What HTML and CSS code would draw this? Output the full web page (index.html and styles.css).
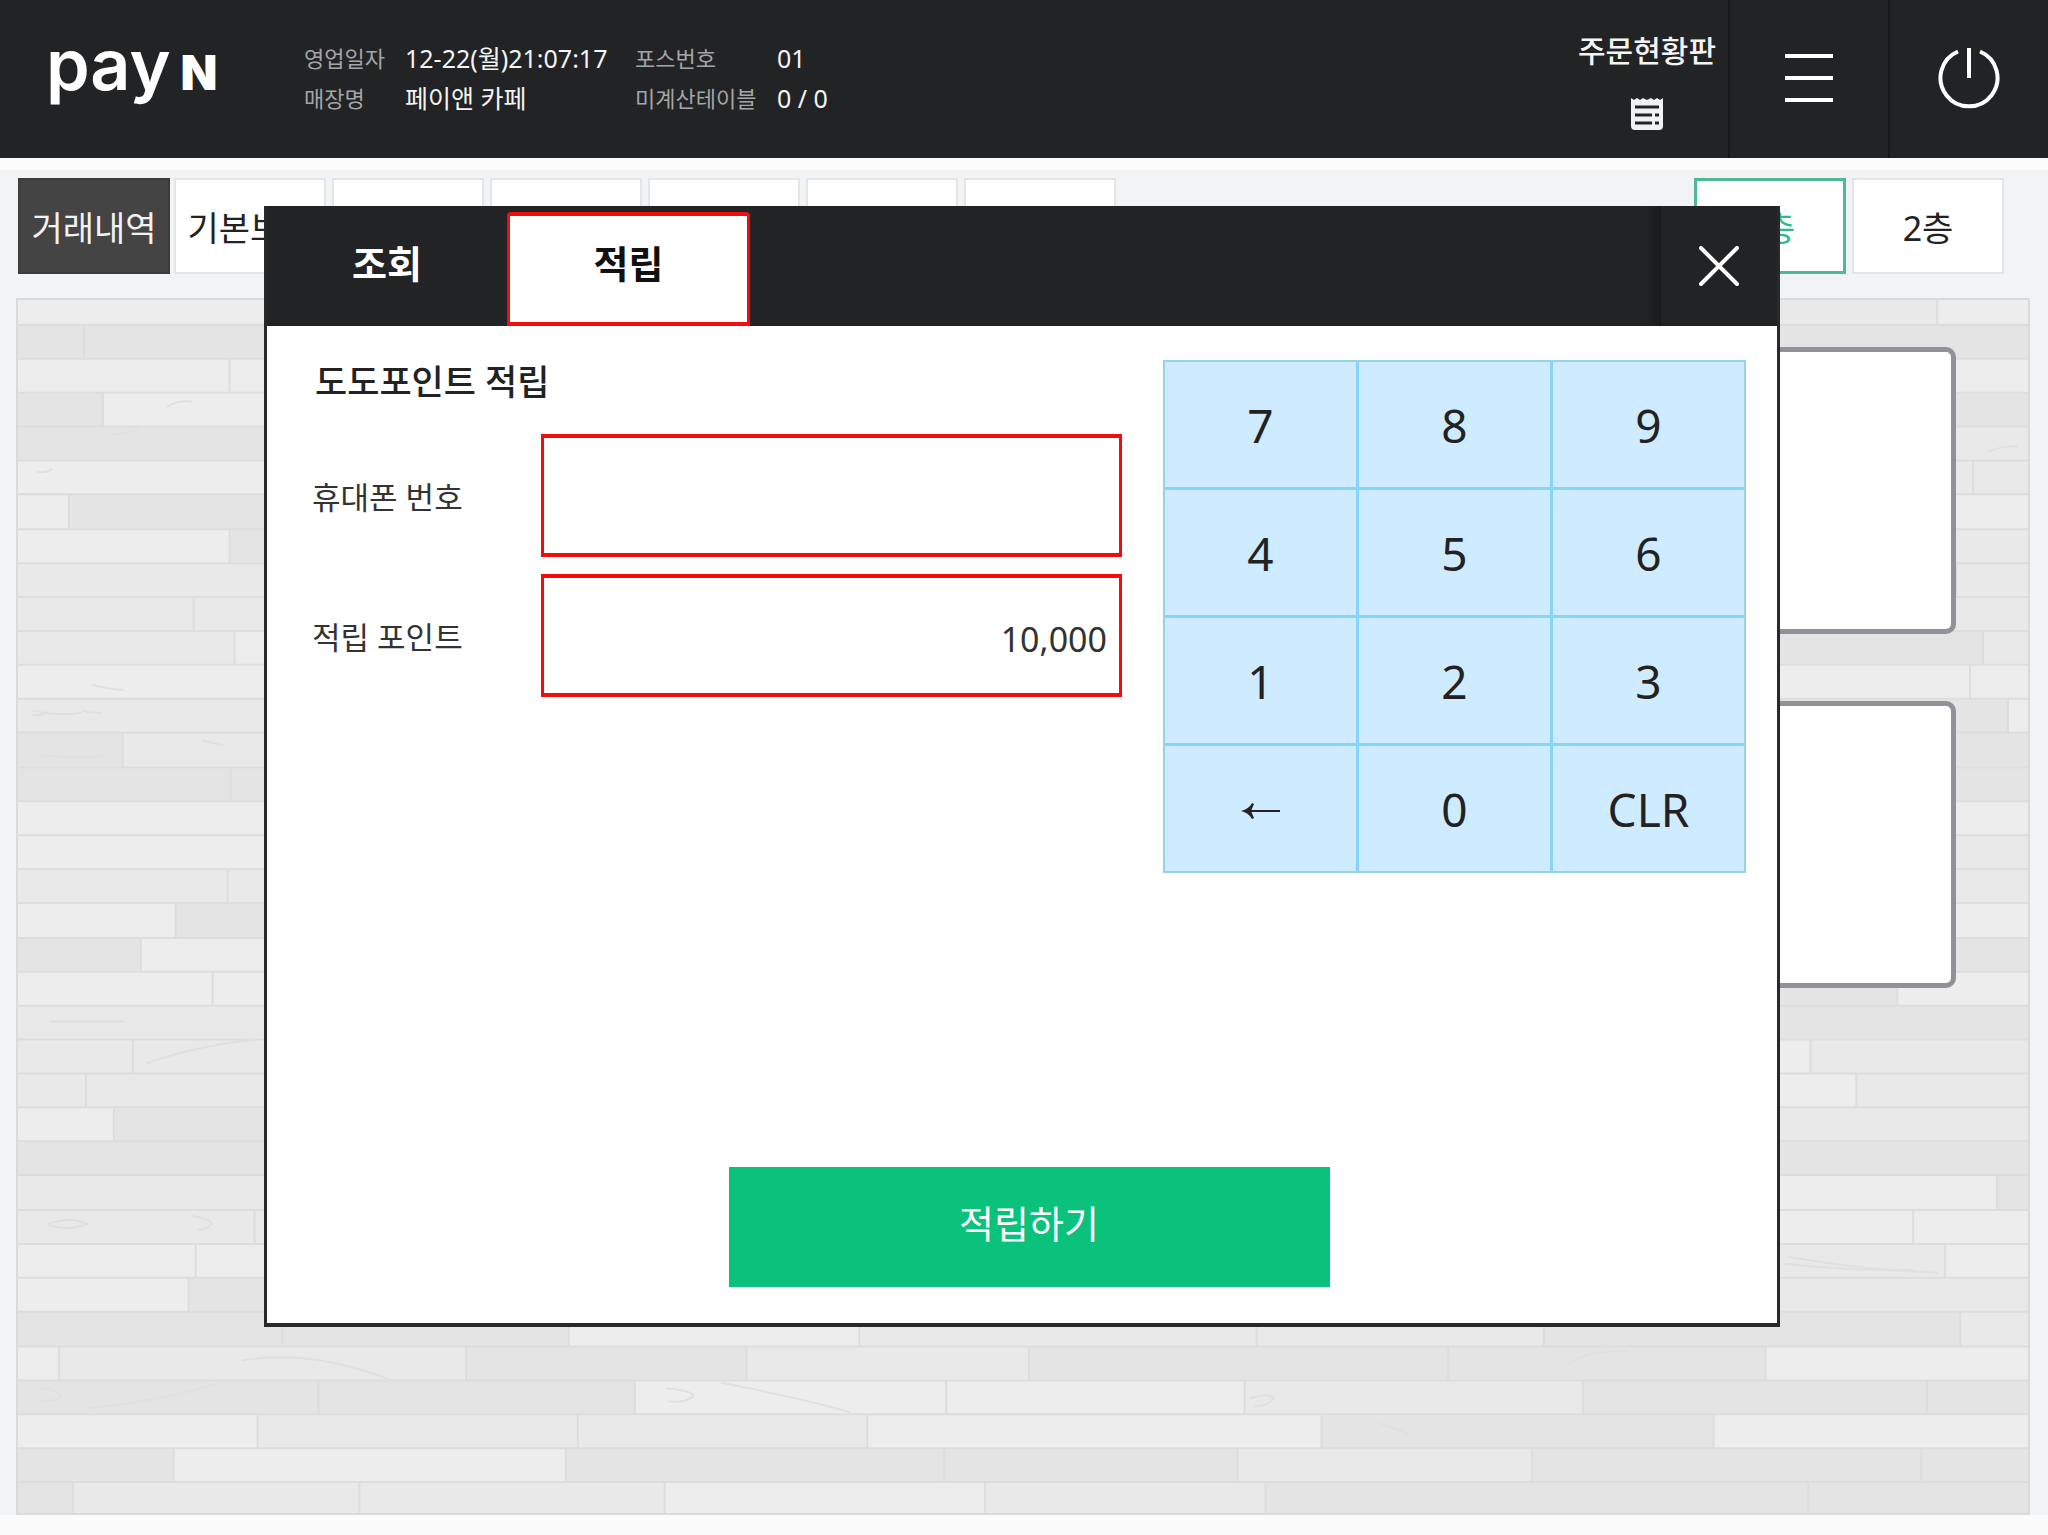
FILE: index.html
```html
<!DOCTYPE html>
<html lang="ko">
<head>
<meta charset="utf-8">
<meta name="viewport" content="width=device-width, initial-scale=1">
<title>pay N</title>
<link rel="stylesheet" href="styles.css">
</head>
<body>
<header class="topbar">
  <a class="logo" href="#" aria-label="pay N"><span class="logo-pay">pay</span><span class="logo-n">N</span></a>
  <dl class="status">
    <dt>영업일자</dt><dd>12-22(월)21:07:17</dd>
    <dt>포스번호</dt><dd>01</dd>
    <dt>매장명</dt><dd>페이앤 카페</dd>
    <dt>미계산테이블</dt><dd>0 / 0</dd>
  </dl>
  <button class="orders" type="button">
    <span>주문현황판</span>
    <svg width="32" height="34" viewBox="0 0 32 34" aria-hidden="true">
      <path fill="#f0f1f3" d="M0 1l3 2 3-2 3 2 3-2 4 2 4-2 3 2 3-2 3 2 3-2v28q0 4-4 4H4q-4 0-4-4z"/>
      <path stroke="#222325" stroke-width="3" d="M4 10h24M4 18h17M24 18h4M4 26h17M24 26h4"/>
    </svg>
  </button>
  <button class="bar-button" type="button" aria-label="메뉴">
    <svg width="48" height="48" viewBox="0 0 48 48" aria-hidden="true"><path stroke="#fff" stroke-width="4" d="M0 2h48M0 24h48M0 46h48"/></svg>
  </button>
  <button class="bar-button" type="button" aria-label="종료">
    <svg width="62" height="62" viewBox="0 0 62 62" aria-hidden="true"><path fill="none" stroke="#fff" stroke-width="4" d="M20 4.500A28.500 28.500 0 1 0 42 4.500M31 1v30"/></svg>
  </button>
</header>

<main class="board">
  <nav class="tabs" aria-label="테이블 그룹">
    <button class="tab tab-dark" type="button">거래내역</button>
    <div class="tab-group">
      <button class="tab" type="button">기본보기</button>
      <button class="tab" type="button" aria-label="빈 탭 1"></button>
      <button class="tab" type="button" aria-label="빈 탭 2"></button>
      <button class="tab" type="button" aria-label="빈 탭 3"></button>
      <button class="tab" type="button" aria-label="빈 탭 4"></button>
      <button class="tab" type="button" aria-label="빈 탭 5"></button>
    </div>
    <div class="tab-group floors">
      <button class="tab tab-current" type="button">1층</button>
      <button class="tab" type="button">2층</button>
    </div>
  </nav>
  <section class="floor" aria-label="테이블 배치">
    <svg class="planks" viewBox="16 298 2014 1217" preserveAspectRatio="none" aria-hidden="true">
      <path fill="#e9e9e9" d="M16 298h2014v1217H16z"/>
      <path fill="#ededed" d="M16 298h264v25H16zM16 357h264v34H16zM101 391h180v34H101zM16 459h264v34H16zM16 493h51v35H16zM16 528h212v34H16zM233 630h40v34h-40zM16 664h264v34H16zM16 801h264v68H16zM16 903h158v35H16zM139 938h140v34H139zM16 972h264v34H16zM16 1108h96v34H16zM16 1245h264v34H16zM16 1279h171v34H16zM568 1313h291v35H568zM16 1348h41v34H16zM1767 1348h263v34h-263zM634 1382h611v34H634zM16 1416h240v34H16zM867 1416h455v34H867zM1715 1416h315v34h-315zM172 1450h393v34H172zM664 1484h321v31H664zM1939 298h91v25h-91zM1770 357h260v34h-260zM1770 493h260v35h-260zM1770 664h260v34h-260zM2010 698h20v34h-20zM1770 801h260v34h-260zM1770 903h260v35h-260zM1899 972h131v34h-131zM1770 1040h42v34h-42zM1770 1074h88v34h-88zM1770 1176h229v35h-229zM1770 1211h260v34h-260zM1947 1245h83v34h-83z"/>
      <path fill="#e4e4e4" d="M16 323h264v34H16zM16 391h85v34H16zM16 425h264v34H16zM67 493h200v35H67zM228 528h40v34h-40zM16 732h105v35H16zM16 767h264v34H16zM174 903h100v35H174zM16 938h123v34H16zM112 1108h160v34H112zM16 1142h264v34H16zM187 1279h90v34h-90zM16 1313h552v35H16zM465 1348h281v34H465zM1029 1348h738v34h-738zM16 1382h618v34H16zM1584 1382h446v34h-446zM1322 1416h393v34h-393zM16 1450h156v34H16zM565 1450h673v34H565zM1533 1450h497v34h-497zM16 1484h55v31H16zM1266 1484h764v31h-764zM1545 1313h417v35h-417zM1770 323h260v34h-260zM1770 391h260v34h-260zM1770 630h215v34h-215zM1770 698h240v34h-240zM1770 732h260v69h-260zM1770 938h260v34h-260zM1770 972h129v34h-129zM1770 1006h260v34h-260zM1770 1142h260v34h-260zM1999 1176h31v35h-31z"/>
      <path class="seam" d="M16 323h2014M16 357h2014M16 391h2014M16 425h2014M16 459h2014M16 493h2014M16 528h2014M16 562h2014M16 596h2014M16 630h2014M16 664h2014M16 698h2014M16 732h2014M16 767h2014M16 801h2014M16 835h2014M16 869h2014M16 903h2014M16 938h2014M16 972h2014M16 1006h2014M16 1040h2014M16 1074h2014M16 1108h2014M16 1142h2014M16 1176h2014M16 1211h2014M16 1245h2014M16 1279h2014M16 1313h2014M16 1348h2014M16 1382h2014M16 1416h2014M16 1450h2014M16 1484h2014"/>
      <path class="seam" d="M82 323v34M228 357v34M101 391v34M67 493v35M228 528v34M192 596v34M233 630v34M121 732v35M229 767v34M226 869v34M174 903v35M139 938v34M211 972v34M131 1040v34M84 1074v34M112 1108v34M253 1211v34M194 1245v34M187 1279v34M281 1313v35M568 1313v35M859 1313v35M1257 1313v35M1545 1313v35M1962 1313v35M57 1348v34M465 1348v34M746 1348v34M1029 1348v34M1449 1348v34M1767 1348v34M317 1382v34M634 1382v34M946 1382v34M1245 1382v34M1584 1382v34M1929 1382v34M256 1416v34M577 1416v34M867 1416v34M1322 1416v34M1715 1416v34M172 1450v34M565 1450v34M944 1450v34M1238 1450v34M1533 1450v34M1923 1450v34M71 1484v31M358 1484v31M664 1484v31M985 1484v31M1266 1484v31M1810 1484v31M1939 298v25M1975 459v34M1958 562v34M1985 630v34M1972 664v34M2010 698v34M1899 972v34M1812 1040v34M1858 1074v34M1999 1176v35M1915 1211v34M1947 1245v34"/>
      <path class="grain" d="M165 405q12-7 25-5M110 433q14-1 27-5M35 470q10 2 15-3M30 710q30 6 50 2M90 684q18 5 32 5M30 714q8 2 16-2M80 710q12 3 20 2M200 740q14 3 22 5M40 755q30 3 60 1M145 1064q50-18 110-24M48 1022h75M45 1225q25-8 40 0q-20 8-40 0M190 1217q18 2 20 8q-5 6-14 6M240 1362q70-12 150 20M85 1410q80-8 140-28M40 1390q18 2 18 8q-5 6-18 4M665 1390q28 2 28 8q-10 7-25 5M720 1384q90 18 130 30M1250 1400q20-6 24 0q-5 8-20 8M1570 1365q20-14 60-12M1380 1425q25 8 30 12M1790 1258q80 14 150 16M1785 1265q80 8 130 6M1790 500h120M1990 450q15-6 30-5"/>
    </svg>
    <button class="table-card" type="button" aria-label="테이블 1"></button>
    <button class="table-card" type="button" aria-label="테이블 2"></button>
  </section>
</main>

<div class="overlay">
  <section class="dialog" role="dialog" aria-label="도도포인트">
    <div class="dialog-bar">
      <button class="dialog-tab" type="button">조회</button>
      <button class="dialog-tab dialog-tab-active" type="button">적립</button>
      <button class="close" type="button" aria-label="닫기">
        <svg width="40" height="40" viewBox="0 0 40 40" aria-hidden="true"><path stroke="#fff" stroke-width="4" stroke-linecap="round" d="M2 2l36 36M38 2L2 38"/></svg>
      </button>
    </div>
    <form class="dialog-body">
      <div class="columns">
        <div class="fields">
          <h2 class="title">도도포인트 적립</h2>
          <label for="phone">휴대폰 번호</label>
          <input id="phone" type="text" inputmode="numeric">
          <label for="points">적립 포인트</label>
          <input id="points" type="text" inputmode="numeric" value="10,000">
        </div>
        <div class="keypad">
          <button type="button">7</button><button type="button">8</button><button type="button">9</button>
          <button type="button">4</button><button type="button">5</button><button type="button">6</button>
          <button type="button">1</button><button type="button">2</button><button type="button">3</button>
          <button type="button" aria-label="지우기"><svg width="40" height="20" viewBox="0 0 40 20" aria-hidden="true"><path fill="none" stroke="#222" stroke-width="2" d="M3 12h36"/><path fill="#222" d="M0 12Q8 10 11 4l2 1-3 7 3 7-2 1Q8 14 0 12z"/></svg></button><button type="button">0</button><button type="button">CLR</button>
        </div>
      </div>
      <button class="submit" type="button">적립하기</button>
    </form>
  </section>
</div>
</body>
</html>
```

FILE: styles.css
```css
* {
  box-sizing: border-box;
}

body {
  margin: 0;
  min-height: 100vh;
  display: flex;
  flex-direction: column;
  background: #fbfbfb;
  color: #222;
  font-family: "Noto Sans", "Noto Sans CJK KR", sans-serif;
}

button {
  margin: 0;
  padding: 0;
  border: 0;
  background: none;
  color: inherit;
  font: inherit;
}

svg {
  display: block;
}

/* Top bar */
.topbar {
  display: flex;
  height: 158px;
  background: #222325;
  color: #f4f4f4;
}

.logo {
  display: flex;
  align-items: baseline;
  gap: 10px;
  width: 304px;
  padding: 29px 0 0 46px;
  color: #fff;
  font-family: Inter, sans-serif;
  line-height: 72px;
  text-decoration: none;
}

.logo-pay {
  font-size: 70px;
  font-weight: 600;
}

.logo-n {
  font-size: 48px;
  font-weight: 900;
}

.status {
  display: grid;
  grid-template-columns: 101px 230px 142px 1fr;
  grid-auto-rows: 40px;
  align-content: center;
  flex: 1;
  margin: 0;
  font-size: 25px;
  line-height: 38px;
}

.status dt {
  color: #a4a5a8;
  font-size: 22px;
}

.status dd {
  margin: 0;
}

.orders {
  display: flex;
  flex-direction: column;
  align-items: center;
  gap: 24px;
  width: 162px;
  padding-top: 29px;
  font-size: 30px;
  font-weight: 500;
  line-height: 44px;
}

.bar-button {
  display: grid;
  place-items: center;
  width: 160px;
  padding-bottom: 2px;
  border-left: 2px solid #17181a;
}

/* Table board */
.board {
  display: flex;
  flex: 1;
  flex-direction: column;
  gap: 24px;
  margin-bottom: 20px;
  padding: 8px 18px 0 16px;
  border-top: 12px solid #fcfcfc;
  background: #f2f3f4;
}

.tabs {
  display: flex;
  gap: 4px;
  padding: 0 26px 0 2px;
}

.tab-group {
  display: flex;
  gap: 6px;
}

.floors {
  margin-left: auto;
}

.tab {
  width: 152px;
  height: 96px;
  border: 2px solid #e4e5e7;
  background: #fff;
  font-size: 34px;
}

.tab-dark {
  border-color: #3c3c3d;
  background: #444445;
  color: #f2f2f2;
}

.tab-current {
  border: 3px solid #4db996;
  color: #2dbb8b;
}

.floor {
  position: relative;
  display: flex;
  flex: 1;
  flex-direction: column;
  align-items: flex-end;
  gap: 67px;
  padding: 47px 72px 47px 0;
  border: 2px solid #d9dadb;
}

.planks {
  position: absolute;
  inset: 0;
  width: 100%;
  height: 100%;
}

.seam {
  fill: none;
  stroke: #dddddd;
  stroke-width: 2;
}

.grain {
  fill: none;
  stroke: #e0e0e0;
  stroke-width: 2;
}

.table-card {
  position: relative;
  width: 400px;
  height: 287px;
  border: 5px solid #919197;
  border-radius: 10px;
  background: #fff;
}

/* Points dialog */
.overlay {
  position: absolute;
  inset: 0;
  display: grid;
  place-items: center;
  padding: 0 4px 2px 0;
}

.dialog {
  width: 1516px;
  max-width: 96%;
  border: 3px solid #28292a;
  border-width: 0 3px 4px;
  background: #fff;
}

.dialog-bar {
  display: flex;
  height: 120px;
  overflow: hidden;
  background: #222325;
}

.dialog-tab {
  width: 240px;
  height: 114px;
  margin-top: 6px;
  padding-bottom: 16px;
  color: #fff;
  font-size: 38px;
  font-weight: 700;
}

.dialog-tab-active {
  width: 243px;
  border: 4px solid #f20c0c;
  border-width: 4px 3px;
  border-radius: 4px 4px 0 0;
  background: #fff;
  color: #111;
}

.close {
  display: grid;
  place-items: center;
  width: 118px;
  height: 120px;
  margin-left: auto;
  border-left: 2px solid #1a1b1c;
  box-shadow: -8px 0 8px #1b1c1d;
}

.dialog-body {
  display: flex;
  flex-direction: column;
  align-items: center;
  gap: 294px;
  padding: 34px 31px 36px 45px;
}

.columns {
  display: grid;
  grid-template-columns: 1fr 583px;
  gap: 41px;
  width: 100%;
}

.fields {
  display: grid;
  grid-template-columns: 229px 1fr;
  align-content: start;
  align-items: center;
  row-gap: 17px;
  color: #333;
  font-size: 31px;
}

.title {
  grid-column: 1 / -1;
  margin: 0 0 13px;
  padding-left: 3px;
  color: #222;
  font-size: 35px;
  font-weight: 500;
  line-height: 44px;
}

.fields input {
  width: 100%;
  height: 123px;
  padding: 6px 12px 0;
  border: 4px solid #f20c0c;
  border-width: 4px 3px;
  background: #fff;
  color: #333;
  font: inherit;
  font-size: 34px;
  text-align: right;
}

.keypad {
  display: grid;
  grid-template-columns: repeat(3, 1fr);
  grid-auto-rows: 125px;
  gap: 3px;
  border: 2px solid #98d1ee;
  background: #87d3fa;
}

.keypad button {
  display: grid;
  place-items: center;
  background: #cfebff;
  font-size: 46px;
}

.submit {
  width: 601px;
  height: 120px;
  padding-bottom: 12px;
  background: #0ac27c;
  color: #fff;
  font-size: 38px;
}
```
